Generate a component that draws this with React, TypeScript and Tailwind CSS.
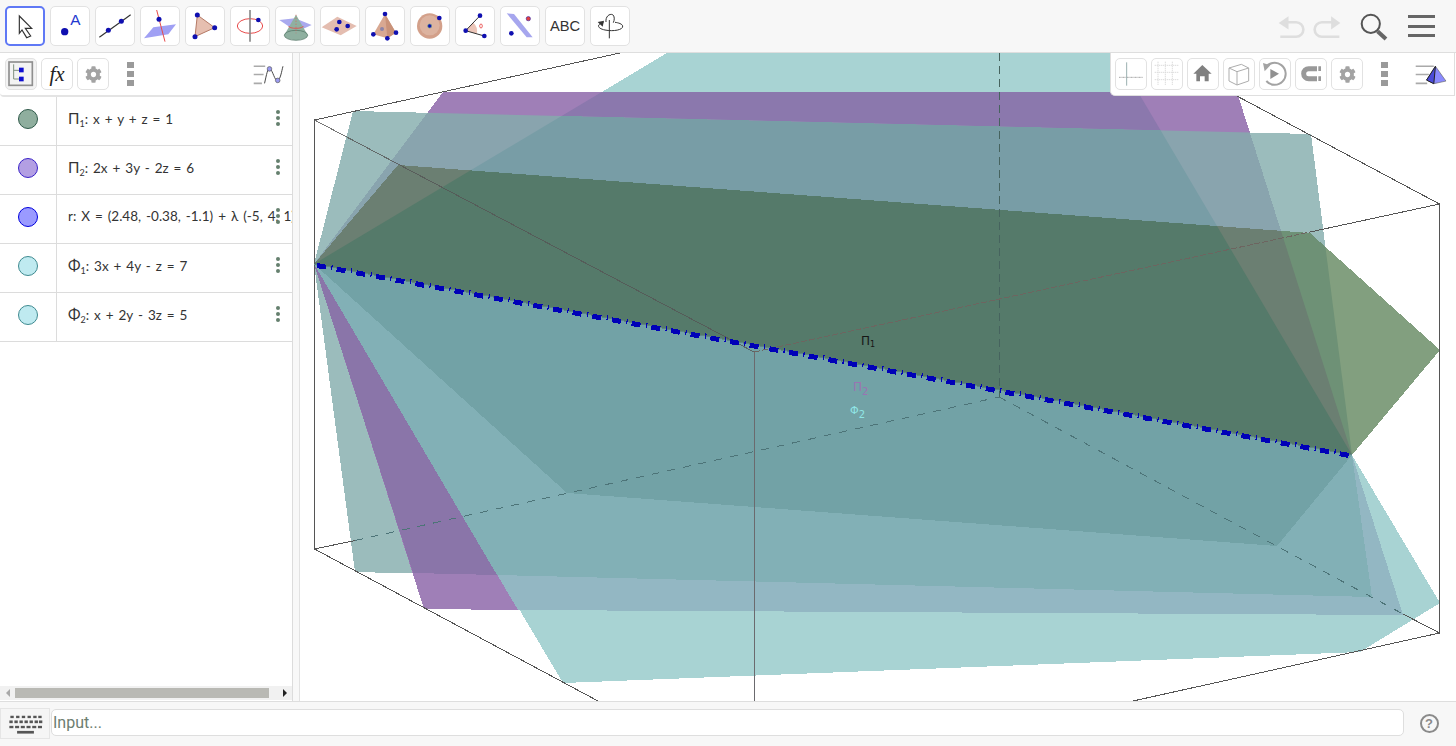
import type { ReactNode } from 'react';
import { FaCog } from 'react-icons/fa';

// plane outlines, page coordinates
const PHI1_TOP = '314,264 667,53 1115,53 1352,455';
const PHI2_TOP = '314,264 353,111 1311,134 1352,455';
const PI2_TOP = '314,264 443,92 1237,92 1250,133 1352,455';
const PI1_TOP = '314,264 398,165 1310,233 1440,350 1352,455';

const BLUE = '#0f0fb0';

function ToolBtn({ vx, active, children }: { vx: number; active?: boolean; children: ReactNode }) {
  return (
    <div
      className={
        active
          ? 'w-10 h-10 shrink-0 rounded-[5px] bg-white border-2 border-[#5f78f5]'
          : 'w-10 h-10 shrink-0 rounded-[5px] bg-white border border-[#e2e2e2]'
      }
    >
      <svg viewBox={`${vx} 18 120 120`} className={active ? 'w-10 h-10 -m-[2px] block' : 'w-10 h-10 -m-px block'}>
        {children}
      </svg>
    </div>
  );
}

function SmallBtn({ vx, tinted, children }: { vx?: number; tinted?: boolean; children: ReactNode }) {
  return (
    <div
      className={
        tinted
          ? 'w-8 h-8 shrink-0 rounded-[5px] bg-[#f3f3f3] border border-[#e2e2e2] flex items-center justify-center'
          : 'w-8 h-8 shrink-0 rounded-[5px] bg-white border border-[#e2e2e2] flex items-center justify-center'
      }
    >
      {vx !== undefined ? (
        <svg viewBox={`${vx} 175 96 96`} className="w-8 h-8 block shrink-0">
          {children}
        </svg>
      ) : (
        children
      )}
    </div>
  );
}

function Dots3() {
  return (
    <div className="flex flex-col gap-[3px] shrink-0">
      <div className="w-[7px] h-[6px] bg-[#9a9a9a]" />
      <div className="w-[7px] h-[6px] bg-[#9a9a9a]" />
      <div className="w-[7px] h-[6px] bg-[#9a9a9a]" />
    </div>
  );
}

function Row({ fill, ring, children }: { fill: string; ring: string; children: ReactNode }) {
  return (
    <div className="relative flex h-[49px] border-b border-[#dcdcdc]">
      <div className="w-[57px] shrink-0 border-r border-[#dcdcdc] flex items-center justify-center pb-[4px]">
        <div className={`w-5 h-5 rounded-full border ${fill} ${ring}`} />
      </div>
      <div className="flex-1 min-w-0 overflow-hidden whitespace-nowrap pl-[11px] flex items-center pb-[5px] text-[13.5px] [word-spacing:1.5px] text-[#333] font-['Lato',sans-serif]">
        <span>{children}</span>
      </div>
      <div className="absolute right-[12px] top-[13px] flex flex-col gap-[2px]">
        <div className="w-1 h-1 rounded-full bg-[#65806e]" />
        <div className="w-1 h-1 rounded-full bg-[#65806e]" />
        <div className="w-1 h-1 rounded-full bg-[#65806e]" />
      </div>
    </div>
  );
}

function Label({ glyph, sub }: { glyph: string; sub: string }) {
  return (
    <>
      <span className="text-[15px]">{glyph}</span>
      <sub className="text-[9px]">{sub}</sub>
    </>
  );
}

function Canvas3D() {
  return (
    <svg viewBox="300 53 1156 648" className="block w-[1156px] h-[648px]" shapeRendering="crispEdges">
      <defs>
        <clipPath id="phi1"><polygon points={PHI1_TOP} /></clipPath>
        <clipPath id="phi2"><polygon points={PHI2_TOP} /></clipPath>
        <clipPath id="pi2"><polygon points={PI2_TOP} /></clipPath>
      </defs>

      {/* above the line r */}
      <polygon points={PHI1_TOP} fill="#a8d3d3" />
      <polygon points={PHI2_TOP} fill="#9bbcbc" />
      <polygon points={PI2_TOP} fill="#9f7fb7" />
      <polygon points={PI2_TOP} fill="#8b78ad" clipPath="url(#phi1)" />
      <polygon points={PI2_TOP} fill="#89a4ae" clipPath="url(#phi2)" />
      <polygon points={PHI2_TOP} fill="#789da6" clipPath="url(#phi1)" />
      <polygon points={PI1_TOP} fill="#829f7f" />
      <polygon points={PI1_TOP} fill="#6e9176" clipPath="url(#phi2)" />
      <g clipPath="url(#pi2)">
        <polygon points={PI1_TOP} fill="#6b7f72" clipPath="url(#phi2)" />
      </g>
      <polygon points={PI1_TOP} fill="#557a6a" clipPath="url(#phi1)" />

      {/* below the line r */}
      <polygon points="314,264 1352,455 1372,597 355,572" fill="#9bbcbc" />
      <polygon points="314,264 424,609 518,610" fill="#9f7fb7" />
      <polygon points="314,264 413,573 497,575" fill="#8a75a9" />
      <polygon points="314,264 1352,455 1440,603 1360,652 563,683" fill="#a8d3d3" />
      <polygon points="314,264 518,610 1403,615 1352,455" fill="#93b7c3" />
      <polygon points="314,264 497,575 1372,597 1352,455" fill="#82b0b6" />
      <polygon points="314,264 567,493 1277,546 1352,455" fill="#72a2a6" />

      {/* box */}
      <g stroke="#555" strokeWidth="1" fill="none">
        <path d="M314.5 120V549M1439.5 204V633M314.5 120L620 53M1235 95L1439.5 204M314.5 549L598 701M1439.5 633L1133 701" />
        <path d="M314.5 549L355 540.5M1310 232L1439.5 204M1403 614L1439.5 633" />
        <path d="M314.5 120L754 352" strokeOpacity="0.8" />
        <path d="M754 352L1310 232" stroke="#6d6560" strokeDasharray="6 2" />
        <path d="M754 352V701" stroke="#6b6a6e" />
        <path d="M999 53V397" stroke="#46635e" strokeDasharray="8 5" />
        <path d="M355 540.5L999 397" stroke="#4d7478" strokeDasharray="8 8" />
        <path d="M999 397L1403 614" stroke="#4d7478" strokeDasharray="8 8" />
      </g>

      {/* line r */}
      <line x1="314" y1="264" x2="1352" y2="455" stroke="#5f8585" strokeWidth="1" />
      <line x1="314" y1="265" x2="1352" y2="456" stroke="#0000b8" strokeWidth="5" strokeDasharray="9 11" strokeDashoffset="-3" />
      <line x1="314" y1="264" x2="1352" y2="455" stroke="#0000b8" strokeWidth="5" strokeDasharray="1.2 18.8" strokeDashoffset="-17.6" />

      <g className="font-['DejaVu_Sans',sans-serif]" fontSize="12" shapeRendering="auto">
        <text x="861" y="345" fill="#161616">Π<tspan fontSize="8" dy="2">1</tspan></text>
        <text x="853" y="391" fill="#9a73b3">Π<tspan fontSize="10" dy="4">2</tspan></text>
        <text x="850" y="414" fill="#8fe5e5" fontSize="11">Φ<tspan fontSize="10" dy="4">2</tspan></text>
      </g>
    </svg>
  );
}

export default function App() {
  return (
    <div className="flex flex-col h-screen w-screen overflow-hidden bg-white font-['Liberation_Sans',sans-serif]">
      {/* top toolbar */}
      <div className="h-[53px] shrink-0 flex bg-[#f7f7f7] border-b border-[#dedede] pl-[5px] pt-[6px] gap-[5px]">
        <ToolBtn vx={15} active>
          <polygon points="58,48 95,85 76,85 92,108 80,113 66,90 58,100" fill="#fff" stroke="#333" strokeWidth="3.5" />
        </ToolBtn>
        <ToolBtn vx={150}>
          <circle cx="194" cy="95" r="11" fill={BLUE} />
          <text x="211" y="76" fontSize="46" fill="#2238d0">A</text>
        </ToolBtn>
        <ToolBtn vx={285}>
          <line x1="298" y1="112" x2="392" y2="44" stroke="#333" strokeWidth="3.5" />
          <circle cx="325" cy="91" r="7.5" fill={BLUE} />
          <circle cx="364" cy="64" r="7.5" fill={BLUE} />
        </ToolBtn>
        <ToolBtn vx={420}>
          <polygon points="432,115 460,82 528,73 505,103" fill="#a0a0f4" />
          <line x1="470" y1="30" x2="495" y2="125" stroke="#e84a4a" strokeWidth="3" />
          <circle cx="477" cy="58" r="7.5" fill={BLUE} />
        </ToolBtn>
        <ToolBtn vx={555}>
          <polygon points="592,45 644,83 585,110" fill="#e6bfb0" stroke="#b57a66" strokeWidth="3" />
          <circle cx="592" cy="45" r="7.5" fill={BLUE} />
          <circle cx="644" cy="83" r="7.5" fill={BLUE} />
          <circle cx="585" cy="110" r="7.5" fill={BLUE} />
        </ToolBtn>
        <ToolBtn vx={690}>
          <ellipse cx="750" cy="78" rx="38" ry="22" fill="none" stroke="#e84a4a" strokeWidth="3" />
          <line x1="750" y1="30" x2="750" y2="125" stroke="#8a8a8a" strokeWidth="5" />
          <circle cx="775" cy="60" r="7" fill={BLUE} />
        </ToolBtn>
        <ToolBtn vx={825}>
          <polygon points="838,60 885,55 935,75 890,95" fill="#a9a9ee" />
          <polygon points="888,44 853,105 923,105" fill="#8fb0a0" />
          <ellipse cx="888" cy="106" rx="35" ry="15" fill="#8fb0a0" />
          <ellipse cx="888" cy="106" rx="35" ry="15" fill="none" stroke="#4f7060" strokeWidth="2" />
          <path d="M866 78a22 7 0 0 0 44 0" fill="none" stroke="#e84a4a" strokeWidth="2.5" />
          <line x1="888" y1="44" x2="888" y2="100" stroke="#e84a4a" strokeWidth="1.5" strokeDasharray="4 5" />
        </ToolBtn>
        <ToolBtn vx={-30}>
          <polygon points="-25,82 22,50 80,78 32,106" fill="#e4bdb0" />
          <circle cx="28" cy="66" r="7" fill={BLUE} />
          <circle cx="53" cy="78" r="7" fill={BLUE} />
          <circle cx="20" cy="88" r="7" fill={BLUE} />
        </ToolBtn>
        <ToolBtn vx={105}>
          <polygon points="165,42 130,103 172,115 198,98" fill="#d8a892" />
          <polygon points="165,42 172,115 198,98" fill="#c99279" />
          <circle cx="156" cy="87" r="6" fill="#8c84a8" />
          <circle cx="165" cy="42" r="7" fill={BLUE} />
          <circle cx="130" cy="103" r="7" fill={BLUE} />
          <circle cx="172" cy="115" r="7" fill={BLUE} />
          <circle cx="198" cy="98" r="7" fill={BLUE} />
        </ToolBtn>
        <ToolBtn vx={240}>
          <circle cx="299" cy="78" r="38" fill="#d3a08a" />
          <circle cx="299" cy="76" r="30" fill="#dcb3a0" />
          <circle cx="299" cy="78" r="6" fill={BLUE} stroke="#5f9a88" strokeWidth="2" />
          <circle cx="328" cy="54" r="7" fill={BLUE} />
        </ToolBtn>
        <ToolBtn vx={375}>
          <path d="M407 92L430 68A34 34 0 0 1 440 102Z" fill="#ecc5b8" />
          <path d="M450 47L407 92L463 108" fill="none" stroke="#333" strokeWidth="3" />
          <ellipse cx="453" cy="78" rx="4" ry="6" fill="none" stroke="#e84a4a" strokeWidth="2.5" />
          <circle cx="450" cy="47" r="7" fill={BLUE} />
          <circle cx="407" cy="92" r="7" fill={BLUE} />
          <circle cx="463" cy="108" r="7" fill={BLUE} />
        </ToolBtn>
        <ToolBtn vx={510}>
          <polygon points="530,40 552,42 608,112 590,112" fill="#a6a6ee" />
          <circle cx="595" cy="56" r="6.5" fill="#e0403f" stroke={BLUE} strokeWidth="1.5" />
          <circle cx="544" cy="100" r="7" fill={BLUE} />
        </ToolBtn>
        <ToolBtn vx={645}>
          <text x="705" y="93" fontSize="44" textAnchor="middle" fill="#333">ABC</text>
        </ToolBtn>
        <ToolBtn vx={780}>
          <path d="M838 60V115" fill="none" stroke="#333" strokeWidth="3" />
          <path d="M828 66C826 50 838 40 848 44C854 48 854 60 850 68" fill="none" stroke="#333" strokeWidth="3" />
          <path d="M820 68C800 72 800 85 825 90C850 95 880 90 878 78C877 72 865 68 855 67" fill="none" stroke="#333" strokeWidth="3" />
          <polygon points="803,66 822,62 818,80" fill="#333" />
        </ToolBtn>

        <div className="ml-auto flex gap-[8px] mt-[7px]">
          <svg viewBox="530 40 85 85" className="w-[28px] h-[28px]">
            <polygon points="535,70 565,50 565,90" fill="#dedede" />
            <path d="M560 68H588a21 21 0 0 1 0 44H540" fill="none" stroke="#dedede" strokeWidth="8" />
          </svg>
          <svg viewBox="640 40 85 85" className="w-[28px] h-[28px]">
            <polygon points="723,70 695,50 695,90" fill="#dedede" />
            <path d="M700 68H667a21 21 0 0 0 0 44H720" fill="none" stroke="#dedede" strokeWidth="8" />
          </svg>
        </div>
        <svg viewBox="780 35 92 92" className="w-[31px] h-[31px] ml-[13px] mt-[6px]">
          <circle cx="815" cy="70" r="27" fill="none" stroke="#555" strokeWidth="6" />
          <line x1="835" y1="92" x2="860" y2="115" stroke="#666" strokeWidth="12" />
        </svg>
        <div className="flex flex-col gap-[6.5px] w-[27px] mt-[9px] ml-[13px] mr-[21px] shrink-0">
          <div className="h-[3px] bg-[#666]" />
          <div className="h-[3px] bg-[#666]" />
          <div className="h-[3px] bg-[#666]" />
        </div>
      </div>

      <div className="flex flex-1 min-h-0">
        {/* algebra view */}
        <div className="w-[293px] shrink-0 flex flex-col border-r border-[#dcdcdc] bg-white">
          <div className="h-[44px] shrink-0 flex items-start pl-[5px] pt-[5px] gap-1 border-b-2 border-[#e4e4e4] rounded-bl-[4px]">
            <SmallBtn vx={16} tinted>
              <rect x="28" y="187" width="70" height="70" fill="none" stroke="#8f8f8f" strokeWidth="5" />
              <path d="M42 194V238H60M42 212H60" fill="none" stroke="#7f907f" strokeWidth="3" />
              <rect x="58" y="204" width="14" height="14" fill="#0f0fd0" />
              <rect x="58" y="231" width="14" height="14" fill="#0f0fd0" />
            </SmallBtn>
            <SmallBtn>
              <span className="font-['Liberation_Serif',serif] italic text-[21px] leading-none text-[#222]">fx</span>
            </SmallBtn>
            <SmallBtn>
              <FaCog className="w-[17px] h-[17px] text-[#a3a3a3]" />
            </SmallBtn>
            <div className="ml-[14px] mt-[4px]">
              <Dots3 />
            </div>
            <svg viewBox="760 185 100 70" className="ml-auto mr-[7px] mt-[5px] w-[33px] h-[23px]">
              <path d="M765 195H800M765 220H795M765 247H790" stroke="#aaa" strokeWidth="5" fill="none" />
              <path d="M798 247C805 215 808 200 814 203C824 208 828 240 838 238C846 236 850 210 854 195" stroke="#444" strokeWidth="3" fill="none" />
              <circle cx="813" cy="203" r="7" fill="#9a9af0" stroke="#555" strokeWidth="2" />
              <circle cx="838" cy="238" r="7" fill="#9a9af0" stroke="#555" strokeWidth="2" />
            </svg>
          </div>

          <div className="flex-1 min-h-0">
            <Row fill="bg-[#8fae9e]" ring="border-[#2f5a4a]">
              <Label glyph="Π" sub="1" />: x + y + z = 1
            </Row>
            <Row fill="bg-[#b39fe3]" ring="border-[#3a22c8]">
              <Label glyph="Π" sub="2" />: 2x + 3y - 2z = 6
            </Row>
            <Row fill="bg-[#9a9aff]" ring="border-[#0000dd]">
              r: X = (2.48, -0.38, -1.1) + λ (-5, 4, 1)
            </Row>
            <Row fill="bg-[#bfeaf0]" ring="border-[#3f8a90]">
              <Label glyph="Φ" sub="1" />: 3x + 4y - z = 7
            </Row>
            <Row fill="bg-[#bfeaf0]" ring="border-[#3f8a90]">
              <Label glyph="Φ" sub="2" />: x + 2y - 3z = 5
            </Row>
          </div>

          <div className="h-[14px] mb-px shrink-0 flex items-center justify-between bg-[#f1f1f1]">
            <div className="w-[15px] flex justify-center">
              <div className="w-0 h-0 border-y-[4px] border-y-transparent border-r-[4px] border-r-[#a8a8a8]" />
            </div>
            <div className="w-[254px] h-[10px] bg-[#b9b9b4]" />
            <div className="flex-1" />
            <div className="w-[15px] flex justify-center">
              <div className="w-0 h-0 border-y-[4px] border-y-transparent border-l-[4px] border-l-[#222]" />
            </div>
          </div>
        </div>

        <div className="w-[7px] shrink-0 bg-[#f8f8f8] border-r border-[#e2e2e2]" />

        {/* graphics view */}
        <div className="relative flex-1 min-w-0 bg-white overflow-hidden">
          <Canvas3D />
          <div className="absolute top-0 left-[810px] w-[345px] h-[43px] flex items-start pl-[4px] pt-[5px] gap-1 bg-white border border-t-0 border-[#dfdfdf] rounded-bl-[5px]">
            <SmallBtn vx={46}>
              <path d="M58 233H130" stroke="#a8a8a8" strokeWidth="3" strokeDasharray="3 1" />
              <path d="M81 188V258" stroke="#9bb0b0" strokeWidth="3" />
            </SmallBtn>
            <SmallBtn vx={154}>
              <path d="M175 186V258M197 186V258M218 186V258M165 197H238M165 218H238M165 240H238" stroke="#dcdcdc" strokeWidth="3" strokeDasharray="4 2" />
            </SmallBtn>
            <SmallBtn vx={262}>
              <path d="M308 196L336 222H327V245H315V230H301V245H290V222H281Z" fill="#808080" />
            </SmallBtn>
            <SmallBtn vx={370}>
              <path d="M388 205L425 194L447 205L412 216ZM388 205V244L412 256V216M447 205V244L412 256" fill="none" stroke="#adadad" strokeWidth="3" />
            </SmallBtn>
            <SmallBtn vx={478}>
              <path d="M497 205A33 33 0 1 1 500 244" fill="none" stroke="#a3a3a3" strokeWidth="6" />
              <polygon points="490,190 512,197 495,215" fill="#a3a3a3" />
              <polygon points="512,208 538,222 512,238" fill="#909090" />
            </SmallBtn>
            <SmallBtn vx={586}>
              <path d="M652 207H627A15 15 0 0 0 627 237H652" fill="none" stroke="#999" strokeWidth="15" />
              <path d="M660 200V214M660 230V244" stroke="#999" strokeWidth="8" />
            </SmallBtn>
            <SmallBtn>
              <FaCog className="w-[17px] h-[17px] text-[#a3a3a3]" />
            </SmallBtn>
            <div className="ml-[14px] mt-[4px]">
              <Dots3 />
            </div>
            <svg viewBox="945 185 100 70" className="ml-auto mr-[7px] mt-[5px] w-[33px] h-[23px]">
              <path d="M950 195H1005M950 220H990M950 247H985" stroke="#aaa" strokeWidth="5" fill="none" />
              <polygon points="1010,195 983,237 1005,248 1042,240" fill="#8a8aff" stroke="#666" strokeWidth="2" />
              <path d="M1010 195L983 237L1005 248Z" fill="#4a4ad8" stroke="#222" strokeWidth="3" />
            </svg>
          </div>
        </div>
      </div>

      {/* input bar */}
      <div className="h-[45px] shrink-0 flex items-start bg-[#f7f7f7] border-t border-[#dedede]">
        <div className="w-[50px] h-[31px] mt-[6px] shrink-0 flex items-center justify-center bg-[#f5f5f5] border border-[#e5e5e5]">
          <svg viewBox="20 100 110 65" className="w-[37px] h-[22px]">
            {[30, 47, 64, 81, 98, 113].map((x) => (
              <rect key={x} x={x} y="108" width="10" height="7" fill="#555" />
            ))}
            {[27, 42, 57, 72, 87, 102, 115].map((x) => (
              <rect key={x} x={x} y="122" width="10" height="8" fill="#555" />
            ))}
            {[27, 44, 61, 78, 95, 112].map((x) => (
              <rect key={x} x={x} y="138" width="12" height="7" fill="#555" />
            ))}
            <rect x="50" y="153" width="50" height="8" fill="#555" />
          </svg>
        </div>
        <div className="flex-1 min-w-0 h-[27px] mt-[7px] ml-px rounded-[5px] bg-white border border-[#dedede] flex items-center pl-px">
          <span className="font-['Roboto',sans-serif] text-[16px] text-[#6c7d70]">Input...</span>
        </div>
        <div className="w-[52px] shrink-0 flex justify-center mt-[12px] pr-[2px]">
          <div className="w-[19px] h-[19px] rounded-full border-2 border-[#8a8a8a] flex items-center justify-center text-[13px] font-bold leading-none text-[#8a8a8a]">
            ?
          </div>
        </div>
      </div>
    </div>
  );
}
